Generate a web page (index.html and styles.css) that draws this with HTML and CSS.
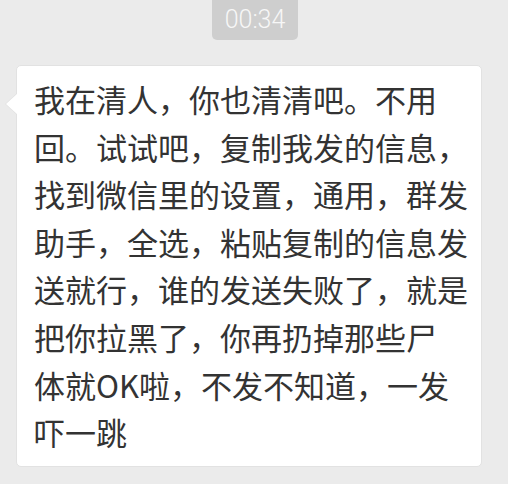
FILE: index.html
```html
<!DOCTYPE html>
<html lang="zh">
<head>
<meta charset="utf-8">
<link rel="stylesheet" href="styles.css">
</head>
<body>
<div class="chat">
  <div class="time-row"><span class="time">00:34</span></div>
  <div class="msg-row">
    <div class="bubble">
      <p class="text">我在清人，你也清清吧。不用<br>回。试试吧，复制我发的信息，<br>找到微信里的设置，通用，群发<br>助手，全选，粘贴复制的信息发<br>送就行，谁的发送失败了，就是<br>把你拉黑了，你再扔掉那些尸<br>体就OK啦，不发不知道，一发<br>吓一跳</p>
    </div>
  </div>
</div>
</body>
</html>
```

FILE: styles.css
```css
html, body {
  margin: 0;
  padding: 0;
  background: #ebebeb;
}
.chat {
  width: 508px;
  height: 484px;
  overflow: hidden;
  display: flex;
  flex-direction: column;
}
.time-row {
  display: flex;
  justify-content: center;
  padding-left: 2px;
}
.time {
  display: block;
  width: 86px;
  height: 40px;
  box-sizing: border-box;
  padding-top: 7px;
  background: #cecece;
  border-radius: 0 0 5px 5px;
  color: #f7f7f7;
  font-family: Roboto, "Liberation Sans", sans-serif;
  font-weight: 300;
  font-size: 25px;
  line-height: 26px;
  text-align: center;
}
.msg-row {
  padding: 25px 0 0 16px;
}
.bubble {
  position: relative;
  width: 466px;
  height: 402px;
  box-sizing: border-box;
  background: #ffffff;
  border: 1px solid #e2e2e2;
  border-radius: 5px;
  padding: 9px 0 0 17px;
}
.bubble::before {
  content: "";
  position: absolute;
  left: -12px;
  top: 27px;
  width: 0;
  height: 0;
  border-top: 11px solid transparent;
  border-bottom: 11px solid transparent;
  border-right: 12px solid #e2e2e2;
}
.bubble::after {
  content: "";
  position: absolute;
  left: -11px;
  top: 27px;
  width: 0;
  height: 0;
  border-top: 11px solid transparent;
  border-bottom: 11px solid transparent;
  border-right: 12px solid #ffffff;
}
.text {
  margin: 0;
  color: #333333;
  font-family: "Noto Sans CJK SC", "Noto Sans", sans-serif;
  font-size: 31px;
  line-height: 47.6px;
  white-space: nowrap;
}
```
